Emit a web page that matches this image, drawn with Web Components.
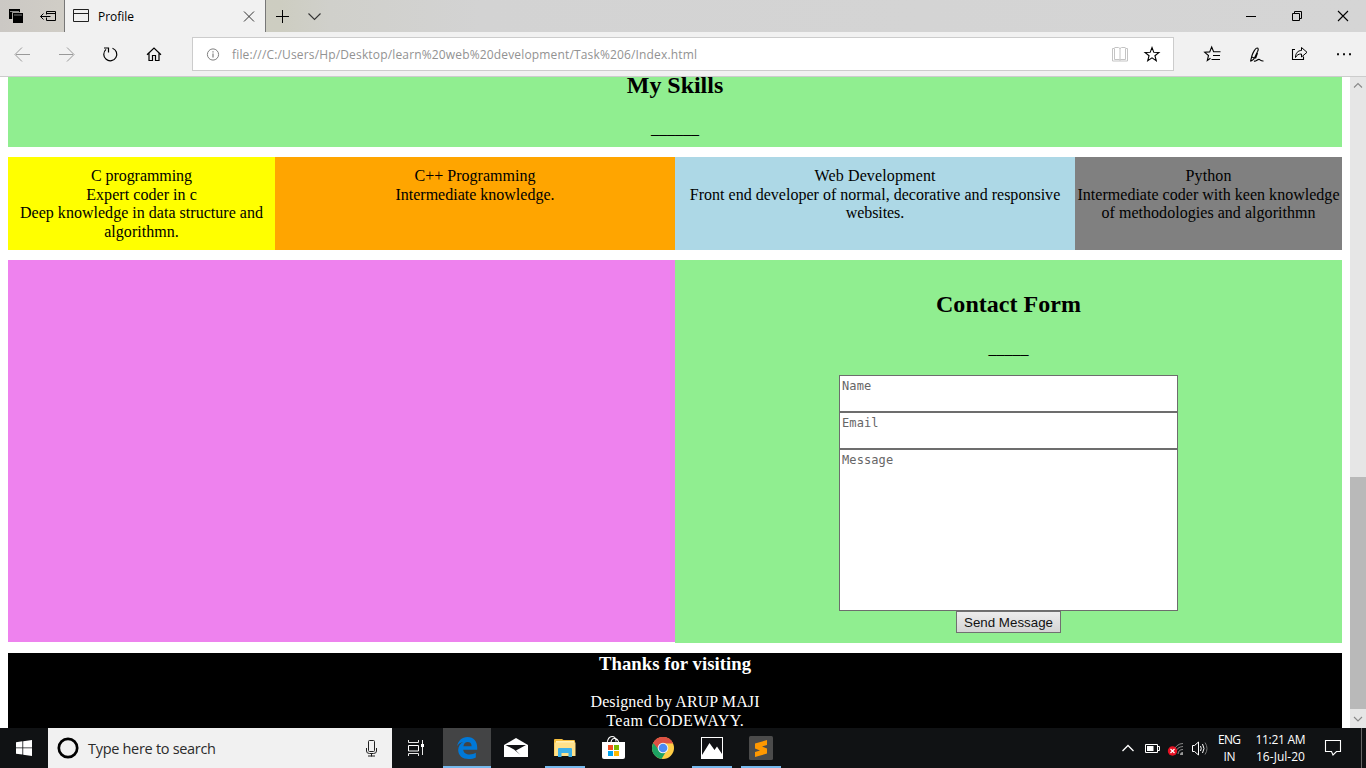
<!DOCTYPE html>
<html lang="en">
<head>
<meta charset="utf-8">
<title>Profile</title>
<style>
html,body{margin:0;height:100%;overflow:hidden}
body{font-family:"Open Sans","Noto Sans",sans-serif}
</style>
</head>
<body>
<desktop-screen></desktop-screen>
<script>
const define = (name, html, setup) => customElements.define(name, class extends HTMLElement {
  constructor() {
    super();
    this.attachShadow({ mode: "open" }).innerHTML = html;
  }
  connectedCallback() { if (setup) setup.call(this, this.shadowRoot); }
});

/* Icon artwork, each drawn in screen coordinates; the box attribute selects the visible cell. */
const star = (cx, cy, r) => Array.from({ length: 10 }, (_, i) => {
  const a = -Math.PI / 2 + i * Math.PI / 5, q = i % 2 ? r * 0.42 : r;
  return (cx + q * Math.cos(a)).toFixed(2) + "," + (cy + q * Math.sin(a)).toFixed(2);
}).join(" ");
const L = (d, c = "#000", w = 1) => `<path d="${d}" fill="none" stroke="${c}" stroke-width="${w}"/>`;
const F = (d, c) => `<path d="${d}" fill="${c}"/>`;
const ICONS = {
  tabs: F("M9 9h11v10h-11z", "#000") + F("M10 11h9v.8h-9z", "#aaa") + F("M12.200 12.200h11v10h-11z", "#d0cdc8") + F("M13 13h10v10h-10z", "#000") + F("M14 14.600h8v.8h-8z", "#999"),
  aside: L("M46.500 14.500v-3h9v9h-9v-3M46.500 13.500h9M40.500 16.500h10M43.500 13.500l-3 3 3 3"),
  page: L("M73.500 9.500h15v12h-15zM73.500 13.500h15", "#222"),
  tabclose: L("M244 11.500l10 10M254 11.500l-10 10", "#333"),
  plus: L("M276 16.500h13M282.500 10v13"),
  chevron: L("M308.500 13.500l6 6 6-6", "#333", 1.1),
  min: L("M1246 16.500h10"),
  restore: L("M1292.500 13.500h7v7h-7zM1294.500 13.500v-2h7v7h-2"),
  close: L("M1338 11l10 10M1348 11l-10 10", "#000", 1.1),
  back: L("M30 54.500h-14M22 47.500l-7 7 7 7", "#999"),
  forward: L("M59 54.500h14M67 47.500l7 7-7 7", "#999"),
  reload: L("M112.500 48.200a6.500 6.500 0 1 1-6.500 1.200M104 48h4.500v4.500", "#000", 1.2),
  home: L("M147 54.700l7-6.700 7 6.700M149 53v7.500h3.500v-5h3v5h3.500V53", "#000", 1.2),
  info: `<circle cx="213" cy="54.500" r="5.600" fill="none" stroke="#808080"/>` + F("M212.500 53.500h1v4h-1zM212.500 51.300h1v1.200h-1z", "#666"),
  book: L("M1112.500 48.500h2v11h5l.5 1 .5-1h5v-11h2v12.500h-15zM1114.500 47.500h4l1.500 1 1.500-1h4M1120 48v12", "#c4c4c4"),
  star: `<polygon points="${star(1152, 54.800, 7.300)}" fill="none" stroke="#000" stroke-width="1.100"/>`,
  hub: L("M1210.500 58.200l-3.200 2.300 1.200-5-3.800-3.200 5-.4 2-4.900 1.900 4.700h6.900M1213 55.500h7M1211.500 59.500h8.500", "#000", 1.1),
  pen: L("M1250.500 61.500l1.500-6c1-3 3.500-7.500 5-7.500s1.500 1.500.7 3.300l-3.500 7.200c-1 1.700-2.500 1.500-3.700 3M1252 57l2 1M1257.500 53l-2 5.500M1254 61c2 1 3.800-2.500 5.500-1.500 1.200.7 1.500 1.700 4 1.500", "#000", 1.1),
  share: L("M1295 49.500h-2.500v10h11v-3", "#000", 1.1) + L("M1295.500 57.500c0-4.500 2.500-7 6-7v-3l5.500 4.800-5.500 4.700v-3c-3 0-4.500.8-6 3.500z"),
  dots: F("M1337 53.300h2v2h-2zM1343 53.300h2v2h-2zM1349 53.300h2v2h-2z", "#111"),
  up: L("M1354 87.500l4-4 4 4", "#888", 1.1),
  down: L("M1354 717l4 4 4-4", "#888", 1.1),
  windows: F("M16 742.200l6.400-.9v6.200H16zM23.200 741.200l8.800-1.200v7.500h-8.800zM16 748.300h6.400v6.300l-6.400-.9zM23.200 748.300h8.800v7.700l-8.800-1.200z", "#fff"),
  cortana: `<circle cx="68" cy="748" r="9.200" fill="none" stroke="#000" stroke-width="2.700"/>`,
  mic: `<rect x="368.500" y="740.500" width="6" height="11" rx="1" fill="none" stroke="#222"/>` + L("M366.500 748v3q0 2.500 3 2.500h4q3 0 3-2.500v-3M371.500 753.500v3M368 756h7", "#222"),
  taskview: L("M408.500 740v2.500h10v-2.500M408.500 756v-2.500h10v2.500M422.500 740v15", "#e8e8e8") + L("M408.500 745.500h10v5.500h-10z", "#fff") + F("M421 744h3v3h-3z", "#fff"),
  edge: F("M457.200 746.200C458 740.800 462 737 467.500 737c6.200 0 9.700 4.400 9.700 10.200v2.600h-14c.3 3.200 3 4.700 6.300 4.700 2.500 0 4.600-.6 6.300-1.700v4.600c-2 1.200-4.500 1.700-7.200 1.700-6 0-10.400-3.300-10.400-9 0-3.700 2-6.600 5.100-8-2.700.3-4.800 1.700-6.100 4.100zM463.400 746.200h8.200c0-2.900-1.400-4.200-3.800-4.200-2.500 0-4 1.600-4.400 4.200z", "#0078d7"),
  mail: F("M504 745l12-7 12 7v12h-24z", "#fff") + F("M505.500 745h20.500l-10 5.500 4.500 4.500-6.500-5.500z", "#111214"),
  explorer: F("M554 740q0-1 1-1h7l1.500 1H574q1 0 1 1v15h-21z", "#f5bd3d") + F("M556 741h18v4h-18z", "#fff1b8") + F("M554.500 742.500h21v13.500h-21z", "#ffe18a") + F("M559 748h12q1 0 1 1v8h-3.500v-4h-7v4H558v-8q0-1 1-1z", "#3cb0e8"),
  store: `<path d="M607 743.500q1-7 5-7t4 5M611 743.500q0-5 3.500-5t4.500 5" fill="none" stroke="#fff" stroke-width="1.100"/>` + F("M602 742h23v15q0 2-2 2h-19q-2 0-2-2z", "#fff") + F("M608 745h5v5h-5z", "#f25022") + F("M614 745h5v5h-5z", "#7fba00") + F("M608 751h5v5h-5z", "#00a4ef") + F("M614 751h5v5h-5z", "#ffb900"),
  chrome: `<circle cx="663" cy="748" r="11" fill="#ffcd46"/>` + F("M663 748L653.200 743A11 11 0 0 1 673 743.300L663 743.200z", "#dd5144") + F("M663 748l-9.800-5a11 11 0 0 0 8.300 16l5.500-9z", "#1da362") + F("M653.200 743q3-6 9.800-6 7 0 10 6.300h-10l-5 5.500z", "#dd5144") + `<circle cx="663" cy="748" r="5.300" fill="#f1f1f1"/><circle cx="663" cy="748" r="4.300" fill="#4c8bf5"/>`,
  photos: `<rect x="701.500" y="737.500" width="21" height="21" fill="#101114" stroke="#fff"/>` + F("M702 755l7.500-12 5 7 2.500-3.500 5 7.500v4.500h-20z", "#fff"),
  sublime: `<rect x="749" y="736" width="24" height="24" rx="1.500" fill="#4b4b4b"/>` + F("M755 743.500l12-3.500v5l-5 1.600 5 1.900v5l-12 3.500v-5l5-1.600-5-1.900z", "#ff9800"),
  trayup: L("M1122.500 751l5.500-5.500 5.500 5.500", "#fff", 1.300),
  battery: L("M1145.500 744.500h12v8h-12zM1158 746.500h1.500v4h-1.500", "#fff") + F("M1147 746h6.500v5h-6.500z", "#fff"),
  wifi: L("M1174 751a9 9 0 0 1 9-7.500M1175.500 753a8 8 0 0 1 7.500-6.500M1178 754a5 5 0 0 1 5-4.500", "#888") + F("M1180 755a3 3 0 0 1 3-3v3z", "#999") + `<circle cx="1172.500" cy="751" r="4.700" fill="#e81123"/>` + L("M1170.500 749l4 4M1174.500 749l-4 4", "#fff", 1.200),
  sound: L("M1192.500 745.500h2l4-3.500v13l-4-3.500h-2z", "#fff") + L("M1200.500 746q1.500 2.500 0 5M1202.500 744q3 4.500 0 9", "#fff") + L("M1205 742.500q4 6 0 12", "#777"),
  notice: L("M1325.500 740.500h15v11h-4l-3.500 3.500-1.500-3.500h-6z", "#fff", 1.100)
};

define("desktop-screen", `<style>
:host{display:flex;flex-direction:column;width:1366px;height:768px;overflow:hidden;background:#fff}
web-view{flex:1;min-height:0}
</style><tab-strip></tab-strip><address-toolbar></address-toolbar><web-view></web-view><task-bar></task-bar>`);

define("tab-strip", `<style>
:host{display:flex;height:32px;background:linear-gradient(90deg,#cbc8c4 0,#d0cdc6 60px,#cdcdc1 280px,#d0d0cb 330px,#d3d3d3 480px,#d5d5d5)}
.tab{display:flex;width:200px;background:#f1f1f1;border:solid #777;border-width:0 1px;font-size:12px;line-height:33px;color:#000}
.tab fit-line{flex:1;padding-left:1px}
.gap{flex:1}
</style><ui-icon name="tabs" box="0 0 32 32"></ui-icon><ui-icon name="aside" box="32 0 32 32"></ui-icon>
<div class="tab"><ui-icon name="page" box="65 0 32 32"></ui-icon><fit-line w="36">Profile</fit-line><ui-icon name="tabclose" box="233 0 32 32"></ui-icon></div>
<ui-icon name="plus" box="266 0 32 32"></ui-icon><ui-icon name="chevron" box="298 0 32 32"></ui-icon><div class="gap"></div>
<ui-icon name="min" box="1228 0 46 32"></ui-icon><ui-icon name="restore" box="1274 0 46 32"></ui-icon><ui-icon name="close" box="1320 0 46 32"></ui-icon>`);

define("address-toolbar", `<style>
:host{display:flex;box-sizing:border-box;height:45px;background:#f1f1f1;border-bottom:1px solid #ccc;padding-right:1px}
.field{box-sizing:border-box;display:flex;width:982px;height:34px;margin:5px 16px 0 16px;background:#fff;border:1px solid #ccc;font-size:12px;line-height:33px;color:#929292}
.field fit-line{flex:1}
</style><ui-icon name="back" box="0 32 44 44"></ui-icon><ui-icon name="forward" box="44 32 44 44"></ui-icon><ui-icon name="reload" box="88 32 44 44"></ui-icon><ui-icon name="home" box="132 32 44 44"></ui-icon>
<div class="field"><ui-icon name="info" box="193 38 39 32"></ui-icon><fit-line w="465">file:///C:/Users/Hp/Desktop/learn%20web%20development/Task%206/Index.html</fit-line><ui-icon name="book" box="1104 38 32 32"></ui-icon><ui-icon name="star" box="1136 38 37 32"></ui-icon></div>
<ui-icon name="hub" box="1190 32 44 44"></ui-icon><ui-icon name="pen" box="1234 32 44 44"></ui-icon><ui-icon name="share" box="1278 32 44 44"></ui-icon><ui-icon name="dots" box="1322 32 43 44"></ui-icon>`);

define("web-view", `<style>
:host{display:flex;overflow:hidden;font-family:"Liberation Serif",serif;font-size:16px;line-height:18.667px;color:#000}
main{flex:1;display:flex;flex-direction:column;gap:10px;padding:0 8px;height:651px;overflow:hidden;box-sizing:border-box}
.skills{display:grid;grid-template-columns:267px 400px 400px 267px;height:93px}
.contact{display:grid;grid-template-columns:1fr 1fr;height:383px}
.photo{background:violet;height:382px}
</style><main><skills-heading></skills-heading>
<div class="skills">
<skill-card style="background:yellow"><fit-line w="101">C programming</fit-line><fit-line w="110.500">Expert coder in c</fit-line><fit-line w="243">Deep knowledge in data structure and</fit-line><fit-line w="74.500">algorithmn.</fit-line></skill-card>
<skill-card style="background:orange"><fit-line w="121">C++ Programming</fit-line><fit-line w="159">Intermediate knowledge.</fit-line></skill-card>
<skill-card style="background:lightblue"><fit-line w="121">Web Development</fit-line><fit-line w="370.500">Front end developer of normal, decorative and responsive</fit-line><fit-line w="58.500">websites.</fit-line></skill-card>
<skill-card style="background:gray"><fit-line w="46">Python</fit-line><fit-line w="262">Intermediate coder with keen knowledge</fit-line><fit-line w="214">of methodologies and algorithmn</fit-line></skill-card>
</div>
<div class="contact"><div class="photo"></div><contact-form></contact-form></div>
<page-footer></page-footer></main><scroll-bar></scroll-bar>`);

define("skills-heading", `<style>
:host{display:flex;flex-direction:column;align-items:center;height:70px;flex:none;background:lightgreen}
h2{margin:0 0 26px;font-size:24px;line-height:17px}
</style><h2><fit-line w="96.500">My Skills</fit-line></h2><span>______</span>`);

define("skill-card", `<style>
:host{display:flex;flex-direction:column;align-items:center;padding-top:10px;height:83px}
</style><slot></slot>`);

define("contact-form", `<style>
:host{display:flex;flex-direction:column;align-items:center;background:lightgreen}
h2{margin:31px 0 22px;font-size:24px;line-height:27px}
.rule{height:35px}
textarea{display:block;box-sizing:border-box;width:339px;height:37px;margin:0;padding:2px;border:1px solid #6d6d6d;border-radius:0;background:#fff;resize:none;overflow:hidden;font:12px/16px "DejaVu Sans Mono",monospace;letter-spacing:.1px}
textarea.tall{height:162px}
textarea::placeholder{color:#666;opacity:1}
button{box-sizing:border-box;width:105px;height:22px;padding:1px 0 0;border:1px solid #707070;border-radius:0;background:linear-gradient(#ececec,#d4d4d4);font:13.333px/20px "Liberation Sans",sans-serif;color:#111}
</style><h2><fit-line w="145">Contact Form</fit-line></h2><span class="rule">_____</span>
<textarea placeholder="Name"></textarea><textarea placeholder="Email"></textarea><textarea class="tall" placeholder="Message"></textarea><button type="button"><fit-line w="89">Send Message</fit-line></button>`);

define("page-footer", `<style>
:host{display:flex;flex-direction:column;align-items:center;height:75px;flex:none;overflow:hidden;background:#000;color:#fff}
h3{margin:0 0 19px;font-size:18.720px;line-height:21px}
</style><h3><fit-line w="152">Thanks for visiting</fit-line></h3><fit-line w="169">Designed by ARUP MAJI</fit-line><fit-line w="137.500">Team CODEWAYY.</fit-line>`);

define("scroll-bar", `<style>
:host{display:flex;flex-direction:column;width:16px;background:#e6e6e6}
.space{height:383px}.thumb{height:232px;background:#b9b9b9}
</style><ui-icon name="up" box="1350 77 16 17"></ui-icon><div class="space"></div><div class="thumb"></div><ui-icon name="down" box="1350 709 16 19"></ui-icon>`);

define("task-bar", `<style>
:host{display:flex;height:40px;background:#101214;color:#fff;font-size:12px}
.search{display:flex;width:344px;background:#f1f1f1;color:#2b2b2b;font-size:14.500px;line-height:41px}
.search fit-line{flex:1}
.apps{display:flex;padding-left:3px;gap:1px;flex:1}
.text{display:flex;flex-direction:column;align-items:center;line-height:17px;padding-top:3px}
.lang{width:35px}.clock{width:67px}
.peek{width:4px;margin-left:11px;border-left:1px solid #666}
</style><ui-icon name="windows" box="0 728 48 40"></ui-icon>
<div class="search"><ui-icon name="cortana" box="48 728 40 40"></ui-icon><fit-line w="128">Type here to search</fit-line><ui-icon name="mic" box="352 728 40 40"></ui-icon></div>
<ui-icon name="taskview" box="392 728 48 40"></ui-icon>
<div class="apps"><app-button active name="edge" box="443 728 48 40"></app-button><app-button name="mail" box="492 728 48 40"></app-button><app-button open name="explorer" box="541 728 48 40"></app-button><app-button name="store" box="590 728 48 40"></app-button><app-button name="chrome" box="639 728 48 40"></app-button><app-button open name="photos" box="688 728 48 40"></app-button><app-button open name="sublime" box="737 728 48 40"></app-button></div>
<ui-icon name="trayup" box="1116 728 24 40"></ui-icon><ui-icon name="battery" box="1140 728 24 40"></ui-icon><ui-icon name="wifi" box="1164 728 24 40"></ui-icon><ui-icon name="sound" box="1188 728 24 40"></ui-icon>
<div class="text lang"><fit-line w="23">ENG</fit-line><fit-line w="12">IN</fit-line></div>
<div class="text clock"><fit-line w="50">11:21 AM</fit-line><fit-line w="49">16-Jul-20</fit-line></div>
<ui-icon name="notice" box="1314 728 36 40"></ui-icon><div class="peek"></div>`);

define("app-button", `<style>
:host{display:grid;width:48px;height:40px}
:host([active]){background:#434445}
ui-icon,i{grid-area:1/1}
i{display:none;align-self:end;justify-self:center;width:40px;height:2px;background:#76b9ed}
:host([active]) i,:host([open]) i{display:block}
:host([active]) i{width:48px}
</style><ui-icon></ui-icon><i></i>`, function (root) {
  const icon = root.querySelector("ui-icon");
  for (const key of ["name", "box"]) icon.setAttribute(key, this.getAttribute(key));
});

define("ui-icon", `<style>:host{display:block;flex:none}svg{display:block}</style><svg xmlns="http://www.w3.org/2000/svg"></svg>`, function (root) {
  const svg = root.querySelector("svg"), box = this.getAttribute("box").split(" ");
  svg.setAttribute("viewBox", box.join(" "));
  svg.setAttribute("width", box[2]);
  svg.setAttribute("height", box[3]);
  svg.innerHTML = ICONS[this.getAttribute("name")];
});

/* A single line of text tracked to a given width. */
define("fit-line", `<style>:host{display:block;white-space:nowrap}span{display:inline-block}</style><span><slot></slot></span>`, function (root) {
  const span = root.querySelector("span"), n = this.textContent.length;
  const extra = (Number(this.getAttribute("w")) - span.getBoundingClientRect().width) / (n - 1);
  span.style.letterSpacing = extra.toFixed(3) + "px";
  span.style.marginRight = (-extra).toFixed(3) + "px";
});
</script>
</body>
</html>
